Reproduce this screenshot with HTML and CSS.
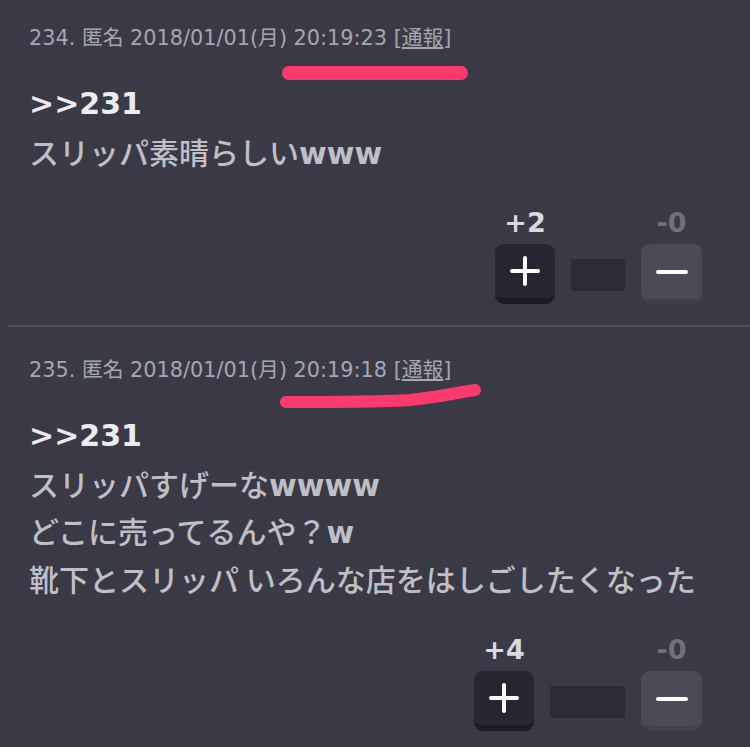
FILE: index.html
```html
<!DOCTYPE html>
<html lang="ja">
<head>
    <meta charset="UTF-8">
    <meta name="viewport" content="width=device-width, initial-scale=1.0">
    <title>コメント</title>
    <link rel="stylesheet" href="styles.css">
</head>
<body>
    <div class="comments">
        <div class="post">
            <div class="meta">234. 匿名 2018/01/01(月) 20:19:23 [<a href="#">通報</a>]</div>
            <div class="body">
                <a class="anchor" href="#">&gt;&gt;231</a>
                <p>スリッパ素晴らしい<span class="w">www</span></p>
            </div>
            <div class="votes">
                <div class="vote">
                    <span class="count plus-count">+2</span>
                    <button class="btn btn-plus" aria-label="plus">
                        <svg width="30" height="30" viewBox="0 0 30 30"><path d="M15 2V28M2 15H28" stroke="#fff" stroke-width="4" stroke-linecap="round"/></svg>
                    </button>
                </div>
                <div class="bar" style="width: 54px"></div>
                <div class="vote">
                    <span class="count minus-count">-0</span>
                    <button class="btn btn-minus" aria-label="minus">
                        <svg width="32" height="30" viewBox="0 0 32 30"><path d="M2 15H30" stroke="#fff" stroke-width="4" stroke-linecap="round"/></svg>
                    </button>
                </div>
            </div>
        </div>

        <div class="post">
            <div class="meta">235. 匿名 2018/01/01(月) 20:19:18 [<a href="#">通報</a>]</div>
            <div class="body">
                <a class="anchor" href="#">&gt;&gt;231</a>
                <p>スリッパすげーな<span class="w">wwww</span></p>
                <p>どこに売ってるんや？<span class="w">w</span></p>
                <p>靴下とスリッパ いろんな店をはしごしたくなった</p>
            </div>
            <div class="votes">
                <div class="vote">
                    <span class="count plus-count">+4</span>
                    <button class="btn btn-plus" aria-label="plus">
                        <svg width="30" height="30" viewBox="0 0 30 30"><path d="M15 2V28M2 15H28" stroke="#fff" stroke-width="4" stroke-linecap="round"/></svg>
                    </button>
                </div>
                <div class="bar" style="width: 75px"></div>
                <div class="vote">
                    <span class="count minus-count">-0</span>
                    <button class="btn btn-minus" aria-label="minus">
                        <svg width="32" height="30" viewBox="0 0 32 30"><path d="M2 15H30" stroke="#fff" stroke-width="4" stroke-linecap="round"/></svg>
                    </button>
                </div>
            </div>
        </div>
    </div>

    <!-- hand-drawn highlight marks over the timestamps -->
    <svg class="marks" width="750" height="747" viewBox="0 0 750 747">
        <path d="M289 73H461" stroke="#fd3a6d" stroke-width="14" stroke-linecap="round" fill="none"/>
        <path d="M286 402C330 402 380 402 410 400C440 397 460 392 475 390" stroke="#fd3a6d" stroke-width="12" stroke-linecap="round" fill="none"/>
    </svg>
</body>
</html>
```

FILE: styles.css
```css
body {
    margin: 0;
    background: #3a3a47;
    font-family: "DejaVu Sans", "Noto Sans CJK JP", sans-serif;
    color: #bdbdc4;
    position: relative;
    overflow: hidden;
    height: 747px;
}

.comments {
    margin-left: 8px;
}

.post {
    padding: 29px 48px 21px 21px;
    border-bottom: 2px solid #4c4c59;
}

.post:first-child {
    padding-top: 24px;
}

.meta {
    font-size: 20.8px;
    line-height: 28px;
    color: #a6a6ae;
    white-space: nowrap;
}

.meta a {
    color: #a6a6ae;
}

.body {
    margin-top: 28px;
    font-family: "Noto Sans CJK JP", sans-serif;
    font-weight: 500;
    font-size: 30px;
    line-height: 47.5px;
    color: #bfbfc6;
    white-space: nowrap;
}

.body p {
    margin: 0;
    height: 47.5px;
}

.anchor {
    display: block;
    height: 47.5px;
    font-family: "DejaVu Sans", sans-serif;
    font-weight: bold;
    color: #ececf0;
    text-decoration: none;
}

.w {
    font-family: "DejaVu Sans", sans-serif;
    font-weight: bold;
    line-height: 1;
}

.votes {
    margin-top: 33px;
    display: flex;
    justify-content: flex-end;
    align-items: flex-end;
    gap: 16px;
}

.vote {
    display: flex;
    flex-direction: column;
    align-items: center;
    gap: 6px;
}

.count {
    font-weight: bold;
    font-size: 27px;
    line-height: 30px;
}

.plus-count {
    color: #d9d9de;
}

.minus-count {
    color: #70707d;
}

.btn {
    display: flex;
    justify-content: center;
    align-items: center;
    width: 60px;
    height: 60px;
    padding: 0;
    border: none;
    border-radius: 9px;
    box-sizing: border-box;
    cursor: pointer;
}

.btn-plus {
    background: #262630;
    border-bottom: 6px solid #1c1c25;
}

.btn-minus {
    width: 61px;
    background: #4b4b58;
    border-bottom: 5px solid #41414d;
}

.bar {
    height: 32px;
    margin-bottom: 13px;
    background: #2b2b36;
    border-radius: 2px;
}

.marks {
    position: absolute;
    top: 0;
    left: 0;
    pointer-events: none;
}
```
